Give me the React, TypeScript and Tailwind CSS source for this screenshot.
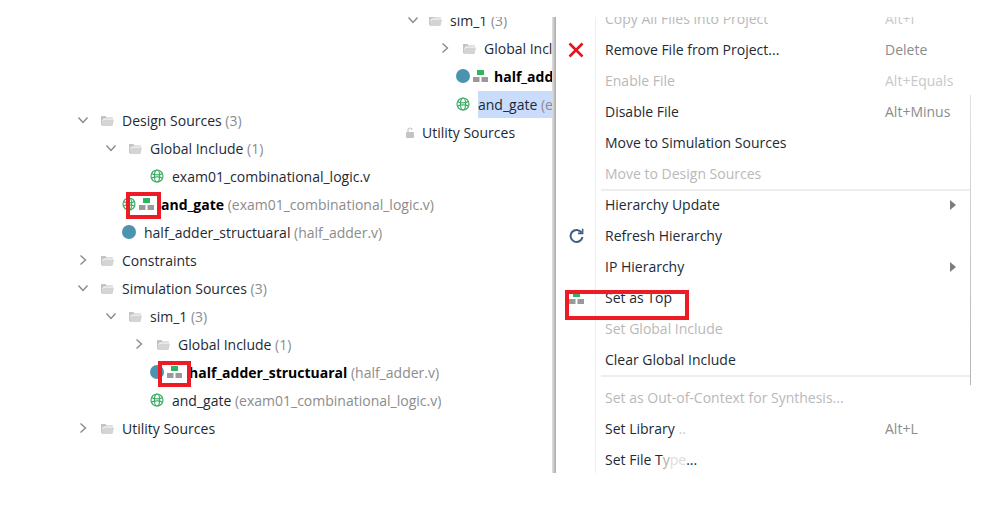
import React from "react";

const font = { fontFamily: '"Open Sans", "Noto Sans", sans-serif' };

function Chevron({ open }: { open: boolean }) {
  return (
    <svg width="12" height="12" viewBox="0 0 12 12" className="shrink-0" fill="none" stroke="#8a8a8a" strokeWidth="1.4">
      {open ? <path d="M1.5 3.5 6 8.5l4.5-5" /> : <path d="M3.5 1.5 8.5 6l-5 4.5" />}
    </svg>
  );
}

function Folder() {
  return (
    <svg width="13" height="11" viewBox="0 0 13 11" className="shrink-0">
      <path d="M0 1h4.5l1 1.5H12v1H3L1 5.5V10H0z" fill="#c4c4c4" />
      <path d="M3.2 4.5H13L11.5 11H.6L1 6z" fill="#d4d4d4" />
    </svg>
  );
}

function Globe() {
  return (
    <svg width="14" height="14" viewBox="0 0 14 14" className="shrink-0" fill="none" stroke="#3fae68" strokeWidth="1.2">
      <circle cx="7" cy="7" r="6" />
      <ellipse cx="7" cy="7" rx="2.6" ry="6" />
      <path d="M1.6 4.6c3 1.4 7.8 1.4 10.8 0M1.4 9c3.2-1.2 8-1.2 11.2 0" />
    </svg>
  );
}

function Dot() {
  return <span className="block w-[14px] h-[14px] rounded-full bg-[#4c93b0] shrink-0" />;
}

function Hier() {
  return (
    <svg width="15" height="12" viewBox="0 0 15 12" className="shrink-0">
      <rect x="4" y="0" width="7" height="5" fill="#2fb45f" />
      <rect x="0" y="7" width="6.5" height="5" fill="#9a9a9a" />
      <rect x="8.5" y="7" width="6.5" height="5" fill="#9a9a9a" />
    </svg>
  );
}

function Name({ children, count, bold }: { children: React.ReactNode; count?: string; bold?: boolean }) {
  return (
    <span className="whitespace-nowrap text-[14px]">
      <span className={bold ? "font-bold text-black" : "text-[#1d2a35]"}>{children}</span>
      {count ? <span className="text-[#8c8c8c]"> {count}</span> : null}
    </span>
  );
}

function FolderRow({ pad, open, name, count }: { pad: string; open: boolean; name: string; count?: string }) {
  return (
    <div className={`h-[28px] flex items-center ${pad}`}>
      <Chevron open={open} />
      <span className="ml-[12px] mr-[8px] flex"><Folder /></span>
      <Name count={count}>{name}</Name>
    </div>
  );
}

function LeftTree() {
  return (
    <div className="w-[400px] shrink-0 pt-[106px]">
      <FolderRow pad="pl-[77px]" open name="Design Sources" count="(3)" />
      <FolderRow pad="pl-[105px]" open name="Global Include" count="(1)" />
      <div className="h-[28px] flex items-center pl-[150px] gap-[8px]">
        <Globe />
        <Name count="">exam01_combinational_logic.v</Name>
        <span className="-ml-[8px]" />
      </div>
      <div className="h-[28px] flex items-center pl-[122px]">
        <Globe />
        <span className="ml-[3px] mr-[7px] flex"><Hier /></span>
        <Name bold count="(exam01_combinational_logic.v)">and_gate</Name>
      </div>
      <div className="h-[28px] flex items-center pl-[122px] gap-[8px]">
        <Dot />
        <Name count="(half_adder.v)">half_adder_structuaral</Name>
      </div>
      <FolderRow pad="pl-[77px]" open={false} name="Constraints" />
      <FolderRow pad="pl-[77px]" open name="Simulation Sources" count="(3)" />
      <FolderRow pad="pl-[105px]" open name="sim_1" count="(3)" />
      <FolderRow pad="pl-[133px]" open={false} name="Global Include" count="(1)" />
      <div className="h-[28px] flex items-center pl-[150px]">
        <Dot />
        <span className="ml-[3px] mr-[7px] flex"><Hier /></span>
        <Name bold count="(half_adder.v)">half_adder_structuaral</Name>
      </div>
      <div className="h-[28px] flex items-center pl-[150px] gap-[8px]">
        <Globe />
        <Name count="(exam01_combinational_logic.v)">and_gate</Name>
      </div>
      <FolderRow pad="pl-[77px]" open={false} name="Utility Sources" />
    </div>
  );
}

function MidTree() {
  return (
    <div className="w-[152px] shrink-0 h-[456px] mt-[17px] overflow-hidden">
      <div className="-mt-[11px]">
        <div className="h-[28px] flex items-center pl-[7px]">
          <Chevron open />
          <span className="ml-[10px] mr-[8px] flex"><Folder /></span>
          <Name count="(3)">sim_1</Name>
        </div>
        <div className="h-[28px] flex items-center pl-[39px]">
          <Chevron open={false} />
          <span className="ml-[12px] mr-[8px] flex"><Folder /></span>
          <Name count="(1)">Global Include</Name>
        </div>
        <div className="h-[28px] flex items-center pl-[56px]">
          <Dot />
          <span className="ml-[3px] mr-[6px] flex"><Hier /></span>
          <Name bold>half_adder_structuaral</Name>
        </div>
        <div className="h-[28px] flex items-center pl-[56px] gap-[8px]">
          <Globe />
          <div className="bg-[#c9dcfb] h-[27px] flex items-center flex-1 overflow-hidden">
            <Name count="(exam01_combinational_logic.v)">and_gate</Name>
          </div>
        </div>
        <div className="h-[28px] flex items-center pl-[6px] gap-[8px]">
          <svg width="8" height="11" viewBox="0 0 8 11" className="shrink-0">
            <path d="M2 5V3a2 2 0 0 1 4 0" fill="none" stroke="#c4c4c4" strokeWidth="1.2" />
            <rect x="0" y="5" width="8" height="6" rx="1" fill="#c4c4c4" />
          </svg>
          <Name>Utility Sources</Name>
        </div>
      </div>
    </div>
  );
}

type Item = { label: React.ReactNode; key2?: string; off?: boolean; arrow?: boolean; icon?: React.ReactNode };

function MenuRow({ label, key2, off, arrow, icon }: Item) {
  return (
    <div className={`h-[31px] flex items-center text-[14px] whitespace-nowrap ${off ? "text-[#b9b9b9]" : "text-[#1d2a35]"}`}>
      <span className="w-[40px] shrink-0 flex items-center justify-center">{icon}</span>
      <span className="w-[9px] shrink-0" />
      <span className="flex-1">{label}</span>
      {key2 ? <span className={`w-[86px] shrink-0 ${off ? "text-[#c8c8c8]" : "text-[#8c8c8c]"}`}>{key2}</span> : null}
      {arrow ? (
        <svg width="6" height="10" viewBox="0 0 6 10" className="mr-[15px] shrink-0"><path d="M0 0l6 5-6 5z" fill="#7d7d7d" /></svg>
      ) : null}
    </div>
  );
}

function Sep() {
  return <div className="h-[2px] ml-[45px] -mb-[2px] bg-[#eeeeee] relative" />;
}

function Menu() {
  const X = (
    <svg width="16" height="16" viewBox="0 0 16 16" fill="none" stroke="#e6121d" strokeWidth="2.6"><path d="M1.5 1.5l13 13M14.5 1.5l-13 13" /></svg>
  );
  const R = (
    <svg width="15" height="15" viewBox="0 0 15 15" fill="none" stroke="#3f5d85" strokeWidth="2">
      <path d="M12.6 4.6A6 6 0 1 0 13.5 9" />
      <path d="M13.6 0.8v4.6H9" fill="none" strokeWidth="1.6" />
    </svg>
  );
  return (
    <div className="relative w-[415px] shrink-0 h-[456px] mt-[17px] overflow-hidden">
      <div className="-mt-[14px] border-l-0">
        <MenuRow off label="Copy All Files into Project" key2="Alt+I" />
        <MenuRow icon={X} label="Remove File from Project..." key2="Delete" />
        <MenuRow off label="Enable File" key2="Alt+Equals" />
        <MenuRow label="Disable File" key2="Alt+Minus" />
        <MenuRow label="Move to Simulation Sources" />
        <MenuRow off label="Move to Design Sources" />
        <Sep />
        <MenuRow arrow label="Hierarchy Update" />
        <MenuRow icon={R} label="Refresh Hierarchy" />
        <MenuRow arrow label="IP Hierarchy" />
        <MenuRow icon={<Hier />} label="Set as Top" />
        <MenuRow off label="Set Global Include" />
        <MenuRow label="Clear Global Include" />
        <Sep />
        <div className="h-[7px]" />
        <MenuRow off label="Set as Out-of-Context for Synthesis..." />
        <MenuRow label={<span>Set Library<span className="text-[#c8c8c8]"> ..</span></span>} key2="Alt+L" />
        <MenuRow label={<span>Set File T<span className="text-[#b0b0b0]">y</span><span className="text-[#dddddd]">pe</span>...</span>} />
      </div>
      <div className="absolute top-0 bottom-0 left-[39px] w-px bg-[#eeeeee]" />
      <div className="absolute right-0 top-[78px] h-[290px] w-px bg-gradient-to-b from-[#e2e2e2] to-[#b5b5b5]" />
    </div>
  );
}

export default function App() {
  return (
    <div className="relative w-[990px] h-[508px] bg-white overflow-hidden flex items-start" style={font}>
      <LeftTree />
      <MidTree />
      <div className="w-[4px] h-[456px] mt-[17px] shrink-0 bg-gradient-to-r from-[#e2e2e2] to-[#a9a9a9]" />
      <Menu />
      <div className="absolute left-[126px] top-[192px] w-[35px] h-[27px] border-4 border-[#ed1c24]" />
      <div className="absolute left-[158px] top-[361px] w-[33px] h-[26px] border-4 border-[#ed1c24]" />
      <div className="absolute left-[565px] top-[290px] w-[124px] h-[30px] border-4 border-[#ed1c24]" />
    </div>
  );
}
